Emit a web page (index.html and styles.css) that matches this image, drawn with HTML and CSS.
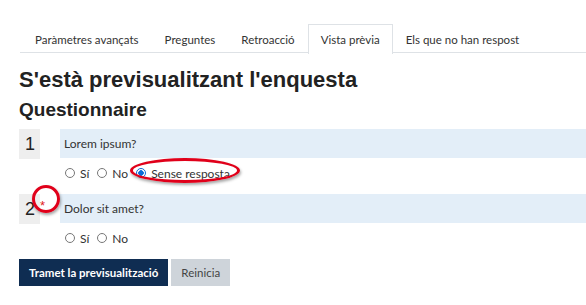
FILE: index.html
```html
<!DOCTYPE html>
<html lang="ca">
<head>
  <meta charset="UTF-8">
  <meta name="viewport" content="width=device-width, initial-scale=1.0">
  <title>Vista prèvia</title>
  <link rel="stylesheet" href="styles.css">
</head>
<body>
  <nav class="tabs">
    <a class="tab">Paràmetres avançats</a>
    <a class="tab">Preguntes</a>
    <a class="tab">Retroacció</a>
    <a class="tab active">Vista prèvia</a>
    <a class="tab">Els que no han respost</a>
  </nav>

  <h2 class="page-title">S'està previsualitzant l'enquesta</h2>
  <h3 class="form-title">Questionnaire</h3>

  <div class="question">
    <div class="qnum">1</div>
    <div class="qbody">
      <div class="qtext">Lorem ipsum?</div>
      <div class="answers">
        <label class="opt"><input type="radio" name="q1">Sí</label>
        <label class="opt"><input type="radio" name="q1">No</label>
        <label class="opt marked"><input type="radio" name="q1" checked>Sense resposta</label>
      </div>
    </div>
  </div>

  <div class="question">
    <div class="qnum">2<span class="req">*</span></div>
    <div class="qbody">
      <div class="qtext">Dolor sit amet?</div>
      <div class="answers">
        <label class="opt"><input type="radio" name="q2">Sí</label>
        <label class="opt"><input type="radio" name="q2">No</label>
      </div>
    </div>
  </div>

  <div class="actions">
    <button class="btn btn-primary">Tramet la previsualització</button>
    <button class="btn btn-secondary">Reinicia</button>
  </div>
</body>
</html>
```

FILE: styles.css
```css
body {
  font-family: Lato, "Open Sans", Arial, sans-serif;
  margin: 0;
  padding: 24px 0 0 19px;
  background-color: #fff;
  color: #333;
}

/* ====== Вкладки ====== */
.tabs {
  display: flex;
  border-bottom: 1px solid #dee2e6;
  margin-left: 1px;
  padding-left: 2px;
  height: 28px;
}
.tab {
  display: block;
  padding: 0 12px;
  font-size: 11.5px;
  line-height: 29px;
  color: #333;
  border: 1px solid transparent;
  border-bottom: none;
}
.tab.active {
  border-color: #dee2e6;
  background-color: #fff;
  height: 29px;
}

/* ====== Заголовки ====== */
.page-title {
  font-family: "Liberation Sans", Arial, sans-serif;
  font-size: 22px;
  font-weight: 600;
  color: #222;
  margin: 14px 0 0 0;
  line-height: 26px;
}
.form-title {
  font-family: "Liberation Sans", Arial, sans-serif;
  font-size: 19px;
  font-weight: 600;
  color: #222;
  margin: 5px 0 0 0;
  line-height: 24px;
}

/* ====== Вопросы ====== */
.question {
  display: flex;
  gap: 20px;
  margin-top: 7px;
}
.question + .question {
  margin-top: 0;
}
.qnum {
  position: relative;
  width: 21px;
  height: 30px;
  background-color: #eee;
  font-family: "Liberation Sans", Arial, sans-serif;
  font-size: 18px;
  line-height: 30px;
  text-indent: 6px;
  color: #222;
}
.req {
  position: absolute;
  left: 21px;
  top: -3px;
  font-size: 13px;
  color: #e02020;
  text-indent: 0;
}
/* красный кружок-аннотация */
.question:nth-of-type(2) .qnum::after {
  content: "";
  position: absolute;
  left: 13px;
  top: -9px;
  width: 22px;
  height: 22px;
  border: 3px solid #e0001a;
  border-radius: 50%;
  box-shadow: 1px 2px 3px rgba(0,0,0,0.35);
}
.qbody {
  flex: 1;
}
.qtext {
  background-color: #e3eef8;
  height: 29px;
  line-height: 29px;
  padding-left: 4px;
  font-size: 12px;
  color: #333;
}
.answers {
  display: flex;
  align-items: flex-start;
  height: 36px;
  box-sizing: border-box;
  padding: 7px 0 0 5px;
  font-size: 12px;
}
.opt {
  position: relative;
  display: flex;
  align-items: center;
  height: 16px;
  margin-right: 8px;
}
.opt input {
  appearance: none;
  width: 10px;
  height: 10px;
  margin: 0 5px 0 0;
  border: 1px solid #777;
  border-radius: 50%;
  background: #fff;
}
.opt input:checked {
  border-color: #0a6cd8;
  background: radial-gradient(circle, #0a6cd8 0 2.5px, #fff 3px);
}
.opt.marked::after {
  content: "";
  position: absolute;
  left: -6px;
  top: -7px;
  width: 110px;
  height: 25px;
  box-sizing: border-box;
  border: 3px solid #e0001a;
  border-radius: 50%;
  box-shadow: 1px 2px 3px rgba(0,0,0,0.35);
}

/* ====== Кнопки ====== */
.actions {
  display: flex;
  gap: 3px;
  margin-top: 0;
}
.btn {
  border: none;
  height: 27px;
  padding: 0 10px;
  font-family: Lato, "Open Sans", Arial, sans-serif;
  font-size: 11.5px;
  cursor: pointer;
}
.btn-primary {
  background-color: #0f2d52;
  color: #fff;
  font-weight: 700;
}
.btn-secondary {
  background-color: #ced4da;
  color: #444;
}
```
